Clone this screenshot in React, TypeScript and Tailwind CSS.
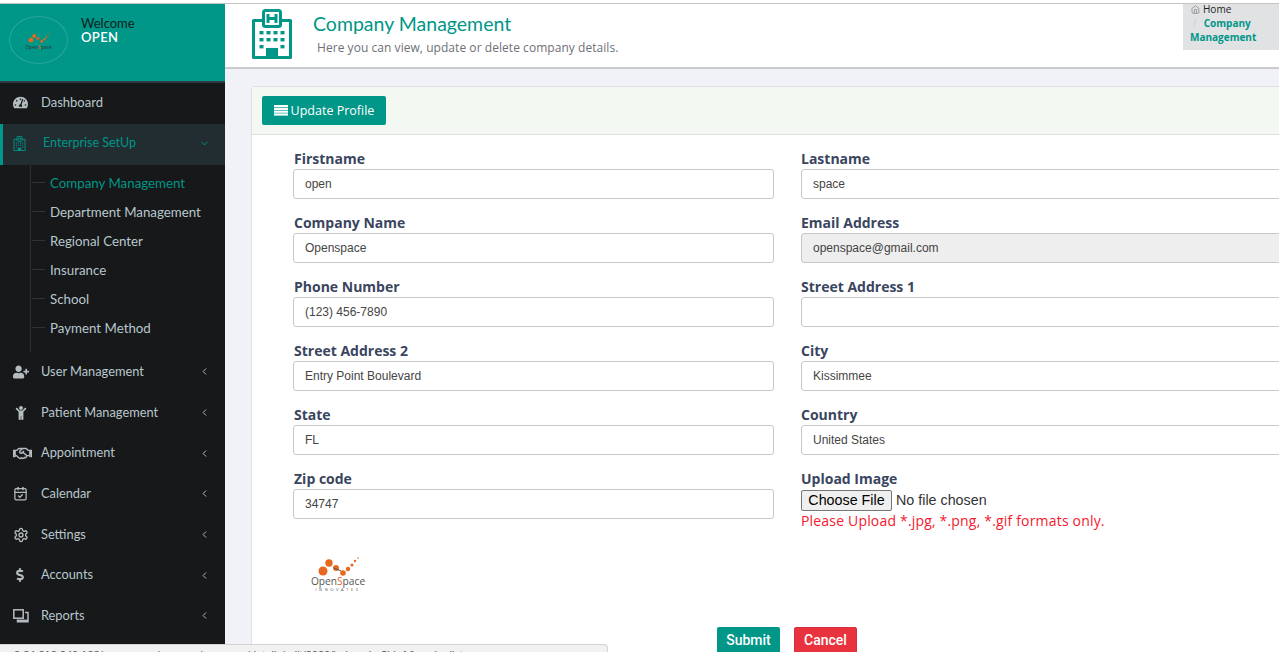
import type { ReactNode } from 'react';
import { FaChild, FaDollarSign, FaRegHandshake, FaTachometerAlt, FaUserPlus } from 'react-icons/fa';
import { FiChevronDown, FiChevronLeft, FiHome } from 'react-icons/fi';
import { LuCalendarCheck, LuSettings } from 'react-icons/lu';

function HospitalIcon({ className }: { className: string }) {
  const dots = [];
  for (let r = 0; r < 3; r++) {
    for (let c = 0; c < 4; c++) {
      if (r === 2 && (c === 1 || c === 2)) continue;
      dots.push(<rect key={`${r}-${c}`} x={7.5 + c * 7} y={22 + r * 7} width="4" height="3.4" />);
    }
  }
  return (
    <svg viewBox="0 0 40 50" className={className} fill="currentColor">
      <path d="M11 11.5H1.5V48.5H38.5V11.5H29" fill="none" stroke="currentColor" strokeWidth="3" strokeLinejoin="round" />
      <rect x="11.5" y="1.5" width="17" height="16" rx="2" fill="none" stroke="currentColor" strokeWidth="3" />
      <path d="M16 5V14M24 5V14M16 9.5H24" fill="none" stroke="currentColor" strokeWidth="3" />
      {dots}
      <rect x="14" y="39" width="12" height="10" />
    </svg>
  );
}

function ReportsIcon() {
  return (
    <svg viewBox="0 0 16 14" className="w-[16px] h-[14px]" fill="none" stroke="currentColor" strokeWidth="1.5">
      <rect x="0.8" y="0.8" width="9.4" height="8.4" />
      <path d="M12 3.5H15V12.8H4.5V10.5" />
      <path d="M4.5 11.6H15" strokeWidth="2" />
    </svg>
  );
}

const subMenu = ['Company Management', 'Department Management', 'Regional Center', 'Insurance', 'School', 'Payment Method'];

const lowerMenu: { label: string; icon: ReactNode; h: string }[] = [
  { label: 'User Management', icon: <FaUserPlus className="text-[16px]" />, h: 'h-[41px]' },
  { label: 'Patient Management', icon: <FaChild className="text-[14px] ml-[1px]" />, h: 'h-[41px]' },
  { label: 'Appointment', icon: <FaRegHandshake className="text-[19px]" />, h: 'h-[40px]' },
  { label: 'Calendar', icon: <LuCalendarCheck className="text-[15px]" />, h: 'h-[41px]' },
  { label: 'Settings', icon: <LuSettings className="text-[16px]" />, h: 'h-[41px]' },
  { label: 'Accounts', icon: <FaDollarSign className="text-[14px]" />, h: 'h-[40px]' },
  { label: 'Reports', icon: <ReportsIcon />, h: 'h-[41px]' },
];

const fields = [
  { label: 'Firstname', value: 'open' },
  { label: 'Lastname', value: 'space' },
  { label: 'Company Name', value: 'Openspace' },
  { label: 'Email Address', value: 'openspace@gmail.com', disabled: true },
  { label: 'Phone Number', value: '(123) 456-7890' },
  { label: 'Street Address 1', value: '' },
  { label: 'Street Address 2', value: 'Entry Point Boulevard' },
  { label: 'City', value: 'Kissimmee' },
  { label: 'State', value: 'FL' },
  { label: 'Country', value: 'United States' },
  { label: 'Zip code', value: '34747' },
];

function LogoDots({ className }: { className: string }) {
  return (
    <svg viewBox="0 0 56 24" className={className}>
      <circle cx="13" cy="17" r="4.5" fill="#e8681e" />
      <circle cx="19" cy="9" r="3.7" fill="#e8681e" />
      <circle cx="26" cy="14" r="3" fill="#e8681e" />
      <circle cx="33" cy="19" r="2.8" fill="#e8681e" />
      <circle cx="38" cy="15" r="2.2" fill="#e8681e" />
      <circle cx="42" cy="11" r="1.6" fill="#e8681e" />
      <circle cx="45" cy="7" r="1.2" fill="#e8681e" />
      <circle cx="48" cy="4" r="0.8" fill="#e8681e" />
      <path d="M24 14 L31 17" stroke="#555" strokeWidth="1" />
    </svg>
  );
}

function Sidebar() {
  return (
    <aside className="w-[225px] shrink-0 bg-[#171819] font-['Lato',sans-serif]">
      <div className="h-[79px] bg-[#009688] border-b-2 border-[#2c3b41] flex pl-[9px] pt-[12px]">
        <div className="w-[59px] h-[48px] rounded-[50%] border border-[#2aa79b] flex flex-col items-center justify-center">
          <LogoDots className="w-[30px] h-[13px]" />
          <span className="font-['Open_Sans'] text-[5px] leading-[6px] text-[#333]">
            Open<span className="text-[#e8681e]">S</span>pace
          </span>
        </div>
        <div className="ml-[13px] text-[13px] leading-[14px]">
          <div className="text-[#10201e]">Welcome</div>
          <div className="text-white font-semibold tracking-[0.4px]">OPEN</div>
        </div>
      </div>
      <div className="h-[41px] flex items-center pl-[13px] pb-[2px] text-[#b8c7ce] text-[13px]">
        <FaTachometerAlt className="text-[15px] text-[#b4bcc0] w-[15px]" />
        <span className="ml-[13px]">Dashboard</span>
      </div>
      <div className="h-[41px] flex items-center bg-[#222d32] border-l-[3px] border-[#009688] pl-[10px] pr-[15px] pb-[2px] text-[#009688] text-[12.5px]">
        <HospitalIcon className="w-[13px] h-[15px]" />
        <span className="ml-[17px] flex-1">Enterprise SetUp</span>
        <FiChevronDown className="text-[11px]" />
      </div>
      <ul className="ml-[30px] border-l border-[#2b2f30] h-[187px] pt-[4px]">
        {subMenu.map((item, i) => (
          <li key={item} className="h-[29px] flex items-center text-[13.3px]">
            <span className="w-[13px] h-px bg-[#2f3536] ml-[1px] -mt-[3px]" />
            <span className={i === 0 ? 'ml-[5px] text-[#009688]' : 'ml-[5px] text-[#b8c7ce]'}>{item}</span>
          </li>
        ))}
      </ul>
      {lowerMenu.map((m) => (
        <div key={m.label} className={`${m.h} flex items-center pl-[13px] pr-[15px] pb-[2px] text-[#b8c7ce] text-[12.8px]`}>
          <span className="w-[19px] flex text-[#b4bcc0]">{m.icon}</span>
          <span className="ml-[9px] flex-1">{m.label}</span>
          <FiChevronLeft className="text-[11px]" />
        </div>
      ))}
    </aside>
  );
}

function Field({ label, value, disabled, left }: { label: string; value: string; disabled?: boolean; left: boolean }) {
  return (
    <div className="h-[64px]">
      <div className={`h-[20px] pt-[1px] leading-[18px] text-[14px] font-bold text-[#3a4560] font-['Open_Sans',sans-serif] ${left ? 'pl-[1px]' : ''}`}>{label}</div>
      <div
        className={`h-[30px] border border-[#c8c8c8] rounded-[3px] px-[11px] flex items-center text-[12px] text-[#444] font-['Liberation_Sans',sans-serif] ${
          disabled ? 'bg-[#eeeeee]' : 'bg-white'
        }`}
      >
        {value}
      </div>
    </div>
  );
}

export default function App() {
  return (
    <div className="relative w-screen h-screen overflow-hidden bg-[#f1f2f7]">
      <div className="h-[4px] bg-white border-b border-[#c4c4c4] border-t-[3px] border-t-white" />
      <div className="flex h-[648px]">
        <Sidebar />
        <main className="flex-1 min-w-0 overflow-hidden">
          <header className="h-[65px] bg-white border-b-2 border-[#c9cbcc] flex">
            <HospitalIcon className="ml-[27px] mt-[5px] w-[40px] h-[50px] text-[#009688]" />
            <div className="ml-[21px] flex-1">
              <h1 className="mt-[6px] text-[19.5px] leading-[28px] text-[#009688] font-['Lato',sans-serif]">Company Management</h1>
              <p className="ml-[4px] mt-[2px] text-[12px] leading-[16px] font-medium tracking-[0.05px] text-[#6f6f78] font-['Open_Sans',sans-serif]">
                Here you can view, update or delete company details.
              </p>
            </div>
            <div className="w-[96px] h-[46px] bg-[#e0e2e4] pl-[7px] text-[10px] leading-[14px] font-['Open_Sans',sans-serif]">
              <div className="-mt-[2px] flex items-center pl-[1px] text-[#222]">
                <FiHome className="text-[9px] text-[#888] mr-[3px]" />
                Home
              </div>
              <div className="font-bold text-[#009688]">
                <span className="text-[#ccc] font-normal ml-[3px] mr-[7px]">/</span>Company Management
              </div>
            </div>
          </header>
          <section className="ml-[26px] mt-[17px] w-[1100px] bg-white border-l border-t border-[#dddfe4] rounded-tl-[4px] h-[570px]">
            <div className="h-[48px] bg-[#f4f8f3] border-b border-[#dedfdb] pl-[10px] pt-[9px]">
              <button className="h-[29px] w-[124px] pt-[1px] bg-[#009688] rounded-[2px] text-white text-[12.5px] flex items-center justify-center font-['Open_Sans',sans-serif]">
                <svg viewBox="0 0 14 12" className="w-[14px] h-[12px] mr-[3px]" fill="currentColor">
                  <rect y="0" width="14" height="2.2" />
                  <rect y="2.8" width="14" height="2.2" />
                  <rect y="5.6" width="14" height="2.2" />
                  <rect y="8.4" width="14" height="2.2" />
                </svg>
                Update Profile
              </button>
            </div>
            <div className="ml-[41px] mt-[14px] grid grid-cols-[481px_481px] gap-x-[27px]">
              {fields.map((f, i) => (
                <Field key={f.label} {...f} left={i % 2 === 0} />
              ))}
              <div className="h-[64px]">
                <div className="h-[20px] pt-[1px] leading-[18px] text-[14px] font-bold text-[#3a4560] font-['Open_Sans',sans-serif]">Upload Image</div>
                <div className="mt-[1px] flex items-center h-[21px] font-['Liberation_Sans',sans-serif] text-[14.3px] text-[#333]">
                  <span className="h-[21px] w-[91px] border border-[#767676] rounded-[2px] bg-[#efefef] text-black flex items-center justify-center">Choose File</span>
                  <span className="ml-[4px]">No file chosen</span>
                </div>
                <p className="text-[14px] leading-[20px] text-[#f5182c] font-['Open_Sans',sans-serif] tracking-[0.18px]">Please Upload *.jpg, *.png, *.gif formats only.</p>
              </div>
            </div>
            <div className="ml-[58px] mt-[21px] w-[56px] flex flex-col items-center">
              <LogoDots className="w-[56px] h-[24px]" />
              <span className="-mt-[2px] font-['Open_Sans'] text-[10.2px] leading-[11px] text-[#555]">
                Open<span className="text-[#e8681e]">S</span>pace
              </span>
              <span className="font-['Open_Sans'] text-[4px] leading-[6px] tracking-[2.6px] text-[#555]">INNOVATES</span>
            </div>
            <div className="ml-[465px] mt-[34px] flex gap-[14px] font-['Roboto',sans-serif] text-[14px] font-medium text-white">
              <button className="w-[63px] h-[26px] bg-[#009688] rounded-[2px]">Submit</button>
              <button className="w-[63px] h-[26px] bg-[#e8333f] border border-[#d42f3b] rounded-[2px]">Cancel</button>
            </div>
          </section>
        </main>
      </div>
      {/* browser status bar sitting over the page */}
      <div className="absolute left-0 bottom-0 w-[608px] h-[8px] bg-[#f1f1f1] border-t border-r border-[#d4d4d4] rounded-tr-[4px] overflow-hidden text-[11px] leading-[12px] text-[#555] font-['Liberation_Sans',sans-serif] pl-[14px] pt-[4px]">
        3.84.212.240.138/openspace/manage/company/details/edit/2020/index.php?id=1&amp;mode=list
      </div>
    </div>
  );
}
